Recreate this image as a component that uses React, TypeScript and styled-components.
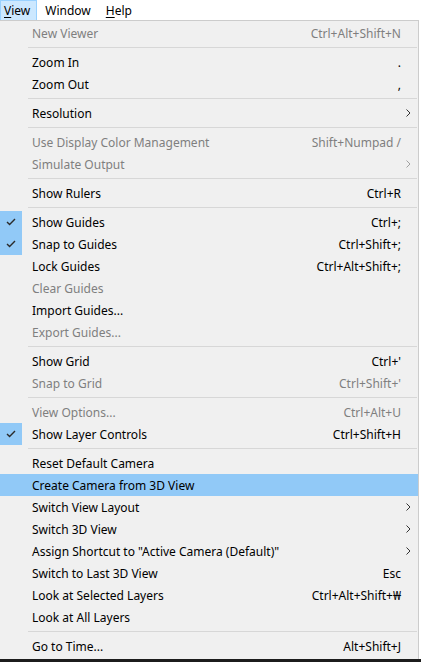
import styled, { createGlobalStyle, css } from 'styled-components';

const GlobalStyle = createGlobalStyle`
	html, body {
		margin: 0;
		padding: 0;
		background: #ffffff;
	}
	body {
		font-family: "Noto Sans", "Noto Sans CJK KR", "DejaVu Sans", sans-serif;
		font-size: 12px;
		color: #000000;
	}
`;

type MenuEntry =
	| { kind: 'sep' }
	| {
		kind: 'item';
		label: string;
		shortcut?: string;
		disabled?: boolean;
		checked?: boolean;
		submenu?: boolean;
		active?: boolean;
	};

const item = (label: string, opts: Partial<Omit<Extract<MenuEntry, { kind: 'item' }>, 'kind' | 'label'>> = {}): MenuEntry => ({ kind: 'item', label, ...opts });
const sep: MenuEntry = { kind: 'sep' };

const entries: MenuEntry[] = [
	item('New Viewer', { shortcut: 'Ctrl+Alt+Shift+N', disabled: true }),
	sep,
	item('Zoom In', { shortcut: '.' }),
	item('Zoom Out', { shortcut: ',' }),
	sep,
	item('Resolution', { submenu: true }),
	sep,
	item('Use Display Color Management', { shortcut: 'Shift+Numpad /', disabled: true }),
	item('Simulate Output', { submenu: true, disabled: true }),
	sep,
	item('Show Rulers', { shortcut: 'Ctrl+R' }),
	sep,
	item('Show Guides', { shortcut: 'Ctrl+;', checked: true }),
	item('Snap to Guides', { shortcut: 'Ctrl+Shift+;', checked: true }),
	item('Lock Guides', { shortcut: 'Ctrl+Alt+Shift+;' }),
	item('Clear Guides', { disabled: true }),
	item('Import Guides...'),
	item('Export Guides...', { disabled: true }),
	sep,
	item('Show Grid', { shortcut: 'Ctrl+\'' }),
	item('Snap to Grid', { shortcut: 'Ctrl+Shift+\'', disabled: true }),
	sep,
	item('View Options...', { shortcut: 'Ctrl+Alt+U', disabled: true }),
	item('Show Layer Controls', { shortcut: 'Ctrl+Shift+H', checked: true }),
	sep,
	item('Reset Default Camera'),
	item('Create Camera from 3D View', { active: true }),
	item('Switch View Layout', { submenu: true }),
	item('Switch 3D View', { submenu: true }),
	item('Assign Shortcut to "Active Camera (Default)"', { submenu: true }),
	item('Switch to Last 3D View', { shortcut: 'Esc' }),
	item('Look at Selected Layers', { shortcut: 'Ctrl+Alt+Shift+₩' }),
	item('Look at All Layers'),
	sep,
	item('Go to Time...', { shortcut: 'Alt+Shift+J' }),
];

const Page = styled.div`
	width: 421px;
	height: 662px;
	display: flex;
	flex-direction: column;
	overflow: hidden;
	background: #ffffff;
`;

const MenuBar = styled.div`
	height: 20px;
	display: flex;
	align-items: stretch;
	gap: 4px;
	background: #ffffff;
	flex-shrink: 0;
`;

const BarItem = styled.div<{ $open?: boolean }>`
	display: flex;
	align-items: center;
	padding: 0 6px 0 3px;
	box-sizing: border-box;
	border: 1px solid transparent;
	border-bottom: none;
	${ ({ $open }) => $open && css`
		background: #cce8ff;
		border-color: #99d1ff;
	` }
`;

const Mnemonic = styled.span`
	text-decoration: underline;
	text-underline-offset: 2px;
`;

const Dropdown = styled.div`
	width: 419px;
	box-sizing: border-box;
	background: #f0f0f0;
	border-top: 1px solid #cccccc;
	border-right: 1px solid #cccccc;
	padding: 1px 0 2px;
	display: flex;
	flex-direction: column;
`;

const Row = styled.div<{ $active?: boolean; $disabled?: boolean }>`
	height: 22px;
	display: grid;
	grid-template-columns: 32px 1fr auto 17px;
	align-items: center;
	white-space: nowrap;
	color: ${ ({ $disabled }) => $disabled ? '#7f7f7f' : '#000000' };
	background: ${ ({ $active }) => $active ? '#91c9f7' : 'transparent' };
`;

const CheckCell = styled.div<{ $checked?: boolean }>`
	width: 22px;
	height: 22px;
	display: flex;
	align-items: center;
	justify-content: center;
	background: ${ ({ $checked }) => $checked ? '#91c9f7' : 'transparent' };
`;

const Label = styled.span`
	line-height: 20px;
	padding-top: 2px;
`;

const Shortcut = styled.span`
	line-height: 20px;
	padding-top: 2px;
	text-align: right;
	padding-left: 24px;
`;

const ArrowCell = styled.div`
	display: flex;
	align-items: center;
	padding-left: 5px;
`;

const Separator = styled.div`
	height: 7px;
	display: flex;
	align-items: center;
	padding-left: 28px;
	padding-right: 1px;

	&::after {
		content: '';
		flex: 1;
		height: 1px;
		background: #d7d7d7;
	}
`;

const Filler = styled.div`
	flex: 1;
	width: 419px;
	background: #f0f0f0;
	border-right: 1px solid #cccccc;
	box-sizing: border-box;
`;

const TaskStrip = styled.div`
	height: 3px;
	background: #1c1c1c;
	flex-shrink: 0;
`;

const CheckMark = () => (
	<svg width='10' height='8' viewBox='0 0 10 8'>
		<polyline points='1,4 3.6,6.5 9,1' fill='none' stroke='#2b2b2b' strokeWidth='1.4' />
	</svg>
);

const SubArrow = ({ disabled }: { disabled?: boolean }) => (
	<svg width='5' height='8' viewBox='0 0 5 8'>
		<polyline points='0.5,0.5 4,4 0.5,7.5' fill='none' stroke={ disabled ? '#a0a0a0' : '#333333' } strokeWidth='1' />
	</svg>
);

const App = () => (
	<>
		<GlobalStyle />
		<Page>
			<MenuBar>
				<BarItem $open><Mnemonic>V</Mnemonic>iew</BarItem>
				<BarItem>Window</BarItem>
				<BarItem><Mnemonic>H</Mnemonic>elp</BarItem>
			</MenuBar>
			<Dropdown>
				{
					entries.map((entry, index) => {
						if (entry.kind === 'sep') return <Separator key={ index } />;
						return (
							<Row key={ index } $active={ entry.active } $disabled={ entry.disabled }>
								<CheckCell $checked={ entry.checked }>
									{ entry.checked && <CheckMark /> }
								</CheckCell>
								<Label>{ entry.label }</Label>
								<Shortcut>{ entry.shortcut }</Shortcut>
								<ArrowCell>{ entry.submenu && <SubArrow disabled={ entry.disabled } /> }</ArrowCell>
							</Row>
						);
					})
				}
			</Dropdown>
			<Filler />
			<TaskStrip />
		</Page>
	</>
);

export default App;
